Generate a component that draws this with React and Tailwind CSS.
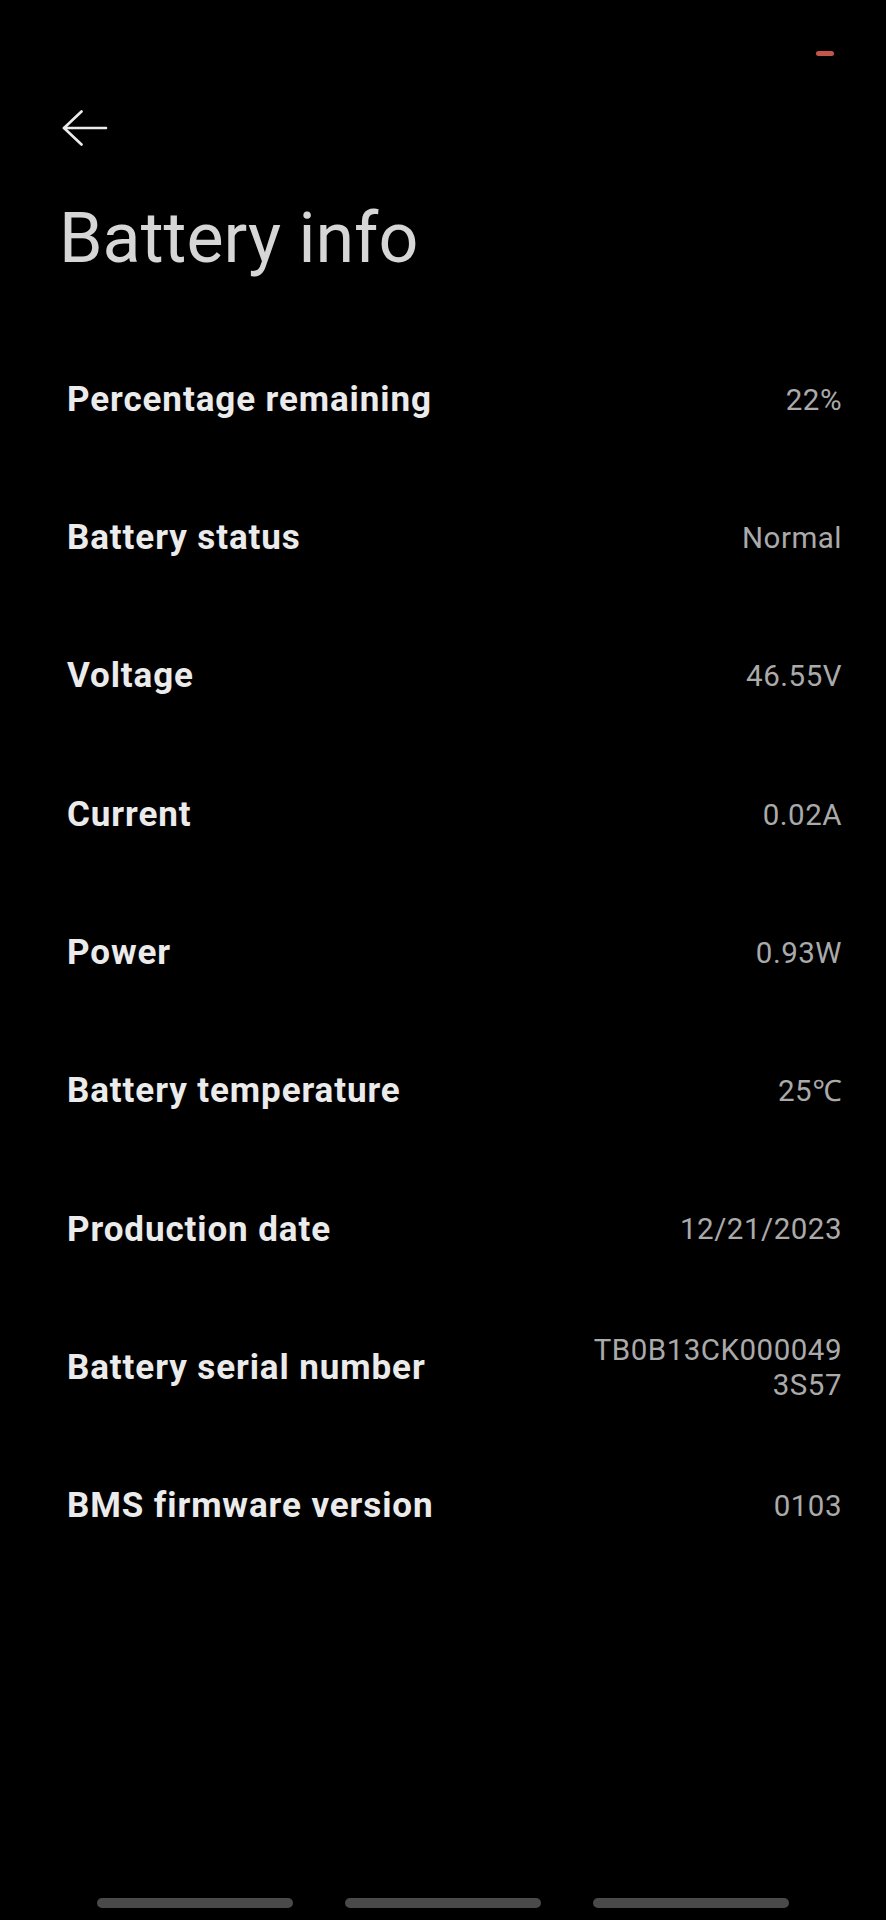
import React from "react";

const rows = [
  ["Percentage remaining", ["22%"]],
  ["Battery status", ["Normal"]],
  ["Voltage", ["46.55V"]],
  ["Current", ["0.02A"]],
  ["Power", ["0.93W"]],
  ["Battery temperature", ["25℃"]],
  ["Production date", ["12/21/2023"]],
  ["Battery serial number", ["TB0B13CK000049", "3S57"]],
  ["BMS firmware version", ["0103"]],
];

export default function App() {
  return (
    <div
      className="bg-black w-[886px] h-[1920px] flex flex-col overflow-hidden"
      style={{ fontFamily: "Roboto, 'Noto Sans', sans-serif" }}
    >
      <div className="h-[80px] flex justify-end pr-[52px] pt-[51px]">
        <div className="w-[18px] h-[5px] rounded-full bg-[#c4554d]" />
      </div>
      <div className="mt-[30px] pl-[62px]">
        <svg width="46" height="36" viewBox="0 0 46 36" fill="none">
          <path d="M2 18H44" stroke="#ececec" strokeWidth="2.6" strokeLinecap="round" />
          <path d="M19.5 1.5L2 18L19.5 34.5" stroke="#ececec" strokeWidth="2.6" strokeLinecap="round" strokeLinejoin="round" />
        </svg>
      </div>
      <h1 className="mt-[52px] pl-[59px] text-[70px] leading-[80px] font-normal text-[#d6d6d6] tracking-[0px]">
        Battery info
      </h1>
      <div className="mt-[53px] flex flex-col">
        {rows.map(([label, value]) => (
          <div key={label} className="h-[138.3px] flex items-center justify-between pl-[67px] pr-[44px]">
            <span className="text-[35px] font-bold tracking-[0.9px] text-[#ebebeb]">{label}</span>
            <span className="text-[29.5px] leading-[35px] tracking-[0.5px] text-[#aaaaaa] text-right flex flex-col">
              {value.map((v) => (
                <span key={v}>{v}</span>
              ))}
            </span>
          </div>
        ))}
      </div>
      <div className="mt-auto pb-[12px] flex justify-center gap-[52px]">
        <div className="w-[196px] h-[10px] rounded-full bg-[#4a4a4a]" />
        <div className="w-[196px] h-[10px] rounded-full bg-[#4a4a4a]" />
        <div className="w-[196px] h-[10px] rounded-full bg-[#4a4a4a]" />
      </div>
    </div>
  );
}
